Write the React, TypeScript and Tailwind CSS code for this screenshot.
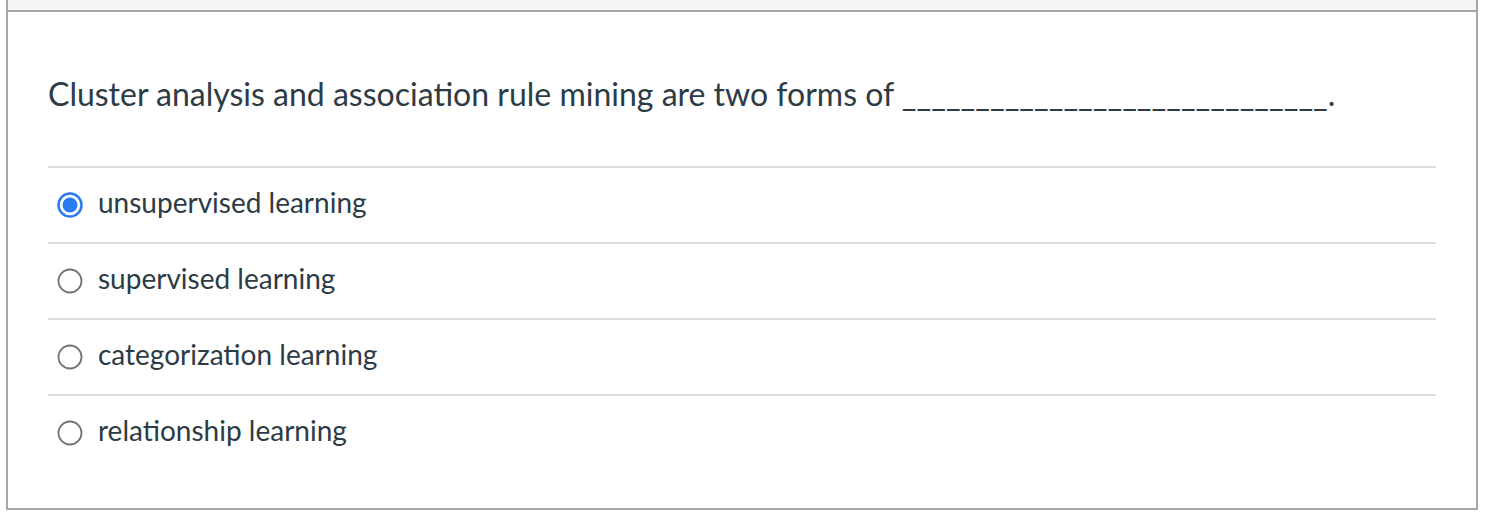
import React from 'react';

const options = [
  { label: 'unsupervised learning', checked: true },
  { label: 'supervised learning', checked: false },
  { label: 'categorization learning', checked: false },
  { label: 'relationship learning', checked: false },
];

function Radio({ checked }: { checked: boolean }) {
  if (checked) {
    return (
      <svg width="26" height="26" viewBox="0 0 26 26" className="shrink-0">
        <circle cx="13" cy="13" r="11.5" fill="#fff" stroke="#2b7bf1" strokeWidth="2.5" />
        <circle cx="13" cy="13" r="7.5" fill="#2b7bf1" />
      </svg>
    );
  }
  return (
    <svg width="26" height="26" viewBox="0 0 26 26" className="shrink-0">
      <circle cx="13" cy="13" r="11.5" fill="#fff" stroke="#727272" strokeWidth="1.8" />
    </svg>
  );
}

export default function App() {
  return (
    <div className="min-h-[528px] bg-white" style={{ fontFamily: 'Lato, "Noto Sans", sans-serif' }}>
      <div className="ml-[6px] w-[1472px] border-x-2 border-b-2 border-[#a6a6a6]">
        {/* header strip */}
        <div className="h-[12px] bg-[#f5f5f5] border-b-2 border-[#a6a6a6]" />

        <div className="px-[40px] pb-[38px]">
          {/* question */}
          <div className="pt-[58px] pb-[48px] text-[32px] leading-[48px] text-[#2d3b45]">
            Cluster analysis and association rule mining are two forms of{' '}
            <span>_____________________________.</span>
          </div>

          {/* answers */}
          <div>
            {options.map((o) => (
              <div
                key={o.label}
                className="flex h-[76px] items-center gap-[15px] border-t-2 border-[#dcdcdc] pl-[9px]"
              >
                <Radio checked={o.checked} />
                <span className="mb-[7px] text-[28px] leading-[36px] text-[#2d3b45]">{o.label}</span>
              </div>
            ))}
          </div>
        </div>
      </div>
    </div>
  );
}
